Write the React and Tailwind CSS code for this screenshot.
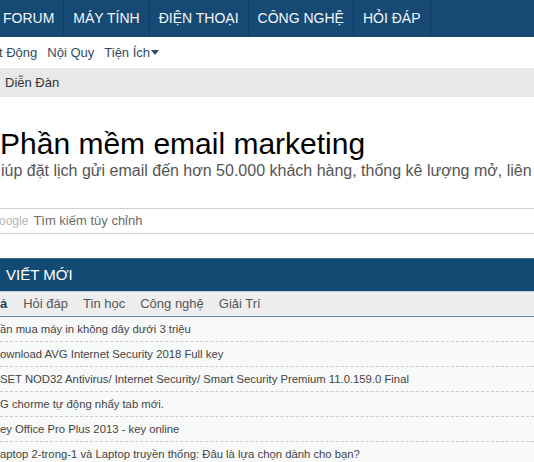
import React from 'react';

const navItems = ['FORUM', 'MÁY TÍNH', 'ĐIỆN THOẠI', 'CÔNG NGHỆ', 'HỎI ĐÁP'];
const tabs = ['Hỏi đáp', 'Tin học', 'Công nghệ', 'Giải Trí'];
const posts = [
    'ần mua máy in không dây dưới 3 triệu',
    'ownload AVG Internet Security 2018 Full key',
    'SET NOD32 Antivirus/ Internet Security/ Smart Security Premium 11.0.159.0 Final',
    'G chorme tự động nhẩy tab mới.',
    'ey Office Pro Plus 2013 - key online',
    'aptop 2-trong-1 và Laptop truyền thống: Đâu là lựa chọn dành cho bạn?',
];

const App = () => {
    return (
        <div className="w-[534px] h-[462px] overflow-hidden bg-white font-['Liberation_Sans',Arial,sans-serif]">
            {/* main nav */}
            <div className="h-[37px] bg-[#164a75] flex items-stretch">
                {navItems.map((item, i) => (
                    <div
                        key={item}
                        className={`flex items-center text-[14px] text-[#f4f7fa] border-r border-[#0f3d62] ${i === 0 ? 'pl-[3px] pr-[9px]' : 'px-[9px]'}`}
                    >
                        {item}
                    </div>
                ))}
            </div>

            {/* sub nav */}
            <div className="h-[31px] flex items-center gap-[10px] text-[13px] text-[#2f4a63] -ml-[1px]">
                <span>t Động</span>
                <span>Nội Quy</span>
                <span className="flex items-center">
                    Tiện Ích
                    <svg width="8" height="5" viewBox="0 0 8 5" className="ml-[1px]">
                        <path d="M0 0h8L4 5z" fill="#2f4a63" />
                    </svg>
                </span>
            </div>

            {/* breadcrumb */}
            <div className="h-[29px] bg-[#e9e9e9] flex items-center pl-[5px] text-[13px] text-[#333]">
                Diễn Đàn
            </div>

            {/* ad block */}
            <div className="pt-[29px]">
                <p className="text-[30px] leading-[35px] text-black whitespace-nowrap">Phần mềm email marketing</p>
                <p className="text-[16px] leading-[19px] text-[#555] whitespace-nowrap pl-[1px]">
                    iúp đặt lịch gửi email đến hơn 50.000 khách hàng, thống kê lượng mở, liên
                </p>
            </div>

            {/* search */}
            <div className="mt-[28px] h-[26px] border-t border-b border-[#cfcfcf] flex items-center whitespace-nowrap">
                <span className="text-[12px] text-[#b5b5b5] -ml-[1px]">oogle</span>
                <span className="text-[13px] text-[#6b6b6b] ml-[5px]">Tìm kiếm tùy chỉnh</span>
            </div>

            {/* new posts */}
            <div className="mt-[24px]">
                <div className="h-[33px] bg-[#134a73] border-t border-[#3d6a8c] flex items-center pl-[6px] text-[15px] text-white">
                    VIẾT MỚI
                </div>
                <div className="h-[26px] bg-[#eeeeee] border-t border-[#b7d0e2] border-b border-b-[#6f8796] flex items-center text-[13px] text-[#555] whitespace-nowrap">
                    <span className="font-bold text-[#1f3f5c]">ả</span>
                    <div className="flex gap-[15px] ml-[16px]">
                        {tabs.map((t) => (
                            <span key={t}>{t}</span>
                        ))}
                    </div>
                </div>
                <div className="bg-[#f8f9f9]">
                    {posts.map((p) => (
                        <div
                            key={p}
                            className="h-[25px] flex items-center border-b border-dashed border-[#cccccc] text-[11.3px] text-[#444] whitespace-nowrap"
                        >
                            {p}
                        </div>
                    ))}
                </div>
            </div>
        </div>
    );
};

export default App;
